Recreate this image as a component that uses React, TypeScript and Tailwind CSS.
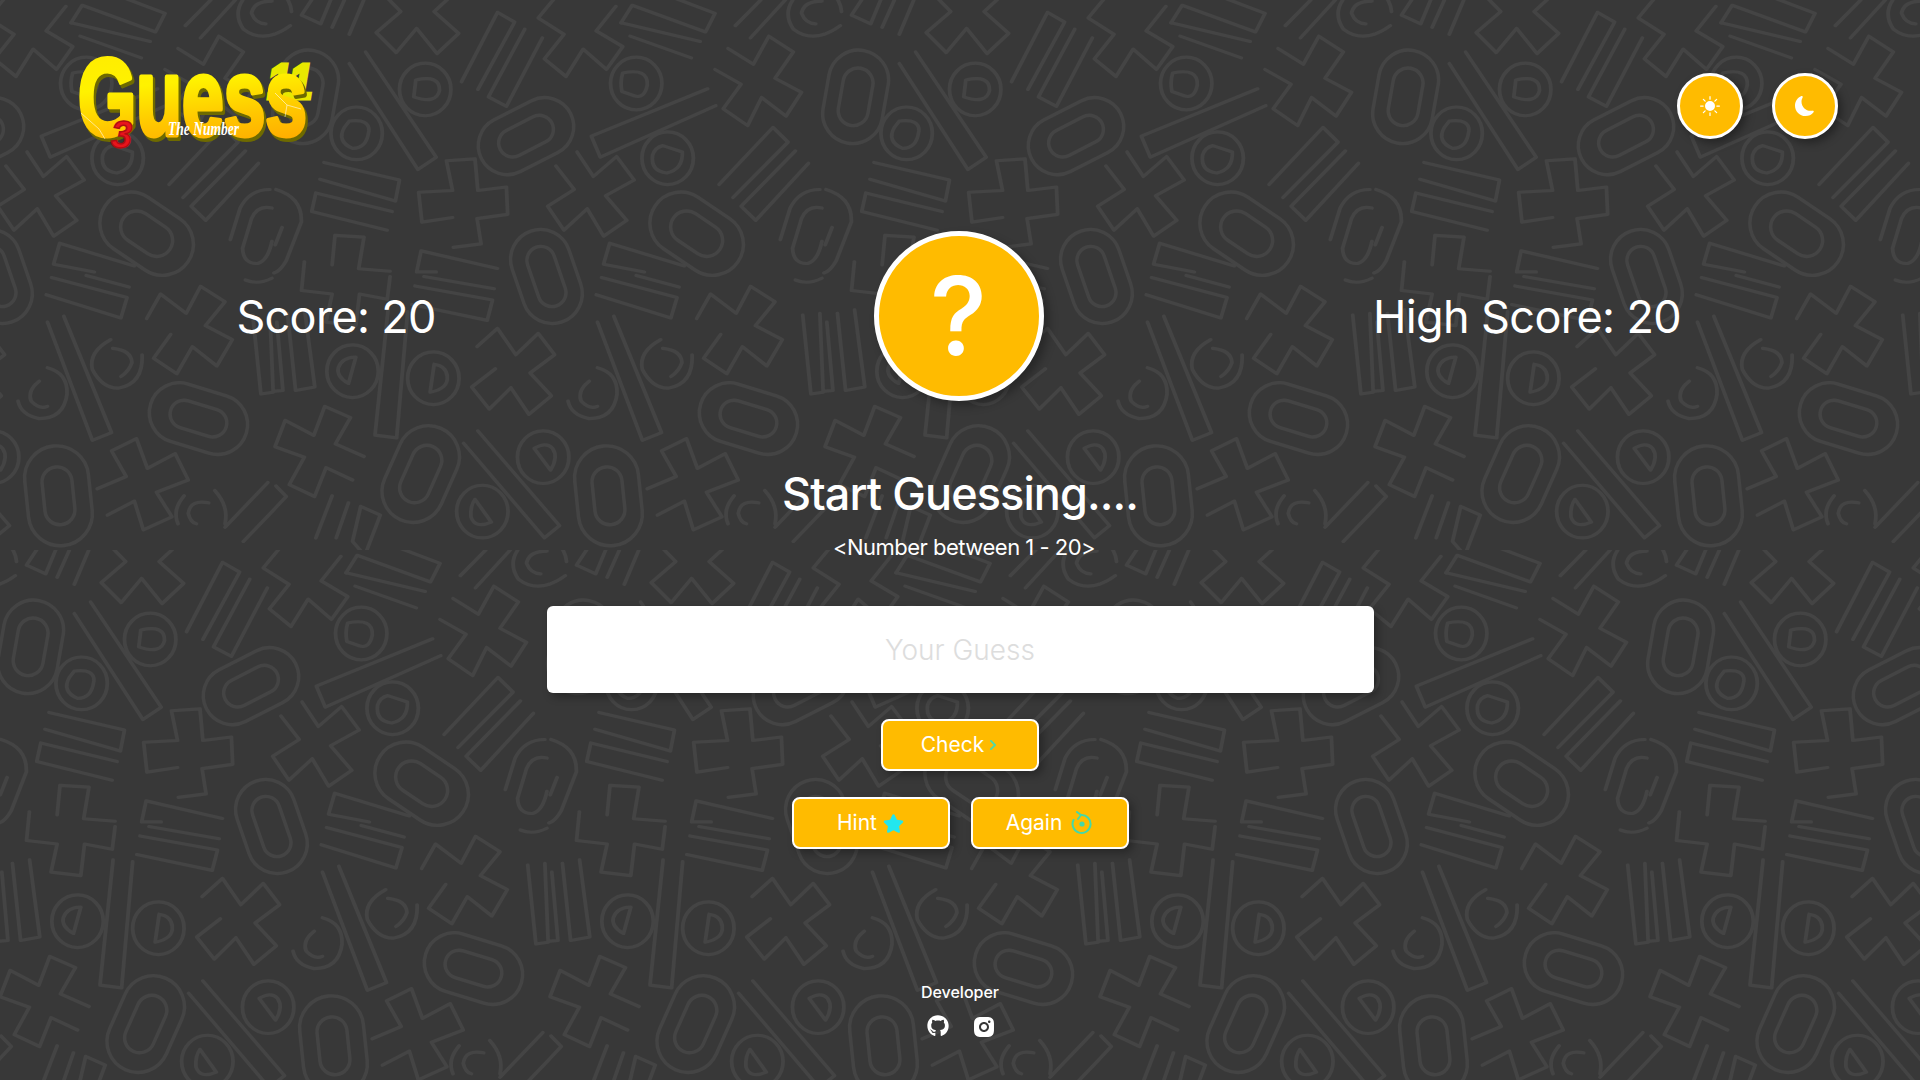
import React from 'react';
import { BsSunFill, BsMoonFill } from 'react-icons/bs';
import { FaGithub, FaStar, FaChevronRight } from 'react-icons/fa';
import { RiInstagramFill } from 'react-icons/ri';

const FONT = "font-['Inter','Noto_Sans',sans-serif]";

// background shapes, traced in a 2.45 x 2.85 stretched frame
const LINES = [
  '65,100 105,30 137,55 112,125 65,100', '140,135 170,57', '182,155 220,50',
  '270,45 308,90 248,150 297,207 347,138 397,210 450,152 390,90 432,45',
  '457,290 545,92 587,120 497,312', '612,140 523,333 567,360 655,165',
  '835,75 787,145 852,190 812,255 755,197 713,275 660,225 708,155 645,108 690,45',
  '848,122 875,72 1055,148 1078,95 930,30', '848,122 1042,175', '870,160 1020,222',
  '1128,130 1190,57', '1165,165 1250,57',
  '1110,195 1172,240 1210,160 1270,205 1225,280 1290,320 1252,388 1192,335 1158,415 1098,367 1142,297 1078,255',
  '222,205 395,505 350,540 182,238',
  '1060,310 775,445 797,505 1080,358',
  '740,490 780,560 837,503 880,570 810,615 862,685 805,730 765,652 708,713 668,645 733,597 688,530',
  '1088,583 1220,420 1257,462 1122,620', '1275,487 1142,645 1178,685 1307,522',
  '120,520 305,570 295,630 110,568', '287,660 100,607 90,660 275,713',
  '435,677 360,690 352,605 435,600 420,515 490,510 497,600 567,590 570,668 495,680 505,752 437,762',
  '140,812 147,728 218,733 205,823 282,830', '72,803 65,885 140,895 125,975 198,985 207,895 275,910 282,845',
  '545,822 358,772 347,832 395,832', '365,845 537,880', '343,872 533,912 520,970 335,925',
  '1003,815 820,750 805,810 905,832', '885,842 990,875', '800,848 985,905 970,963 787,897',
  '1033,965 1067,895 1130,950 1165,873 1225,917 1177,985 1243,1025 1205,1100 1145,1045 1107,1122 1050,1078 1092,1010',
  '1293,955 1313,1180 1343,1175 1335,950', '1352,975 1367,1170 1345,1172', '1378,950 1398,1170 1445,1160 1420,940',
  '277,940 245,1297 298,1305 325,945',
  '495,1045 545,993 590,1068 645,1007 685,1068 625,1120 677,1185 622,1238 578,1162 525,1223 482,1160 540,1108',
  '790,975 900,1312 947,1290 830,958',
  '218,1358 148,1322 185,1247 122,1215 95,1298 25,1255 0,1330 72,1360 35,1438 97,1472 125,1390 190,1425',
  '497,1285 697,1555 660,1590 462,1320',
  '912,1450 983,1415 947,1342 1008,1307 1035,1392 1103,1350 1135,1425 1057,1460 1095,1530 1025,1567 1003,1485 937,1525',
  '1225,1560 1330,1432', '1350,1442 1375,1472 1350,1503 1270,1600',
  '140,1470 100,1590', '180,1490 150,1590', '210,1500 258,1525 220,1640 190,1600 210,1500',
];

const ARCS = [
  'M345,285 Q405,270 403,315 Q395,355 340,333 Z',
  'M182,402 Q232,395 230,430 Q225,480 190,480 Q150,460 170,420 Z',
  'M852,265 Q915,250 912,300 Q905,340 880,330 L850,318 Q845,290 852,265 Z',
  'M950,472 L998,490 Q1000,540 960,550 Q920,545 925,500 Q930,478 950,472 Z',
  'M198,1075 L180,1150 Q150,1130 155,1105 Q165,1075 198,1075 Z',
  'M390,1095 L380,1175 Q425,1165 422,1130 Q420,1100 390,1095 Z',
  'M635,1335 L675,1397 Q695,1360 680,1335 Q665,1315 635,1335 Z',
  'M490,1480 L530,1545 Q490,1565 480,1530 Q478,1500 490,1480 Z',
  'M1238,740 L1262,650 Q1285,597 1335,597', 'M1350,597 Q1415,620 1412,690 L1375,800 Q1360,830 1345,835',
  'M1275,855 Q1305,870 1340,850', 'M1340,650 Q1305,640 1290,680 L1268,765 Q1270,810 1305,808 Q1330,800 1340,745',
  'M1348,755 L1365,705',
  'M790,1105 Q840,1120 838,1180 Q830,1250 770,1250 Q725,1240 718,1200', 'M770,1143 Q740,1170 750,1200 Q770,1225 790,1215',
  'M945,1025 Q890,1060 900,1110 Q925,1165 965,1163 Q1025,1150 1022,1068', 'M950,1050 Q995,1055 997,1090 Q990,1115 970,1130',
  'M1125,1470 Q1095,1510 1110,1550', 'M1200,1455 Q1235,1500 1225,1550', 'M1185,1490 Q1140,1480 1135,1520 Q1140,1545 1155,1550',
  'M1280,40 Q1240,90 1270,140 Q1320,185 1385,130', 'M1340,60 Q1295,60 1290,95 Q1300,125 1325,125', 'M1350,20 Q1385,50 1388,90',
];

const RINGS = [[368, 312], [200, 437], [885, 295], [962, 508], [190, 1115], [388, 1135], [657, 1360], [508, 1515]];

// x, y (frame), outer w, outer l, tilt, inner w, inner l
const PILLS = [
  [75, 333, 60, 94, 10, 30, 58],
  [615, 445, 58, 100, 63, 28, 58],
  [1033, 723, 62, 100, -56, 32, 56],
  [665, 845, 60, 96, -19, 28, 62],
  [1160, 1250, 60, 100, -73, 28, 58],
  [357, 1408, 62, 100, 24, 30, 60],
  [817, 1470, 64, 100, -6, 30, 58],
];

function BgPattern() {
  return (
    <svg className="absolute inset-0" width="1920" height="1080">
      <defs>
        <g id="bg-shapes" fill="none" stroke="#444444" strokeWidth="3.4" strokeLinecap="round" strokeLinejoin="round">
          <g transform="scale(0.40816 0.35088) translate(0 -57)" strokeWidth="9">
            {LINES.map((p, i) => <polyline key={i} points={p} />)}
            {ARCS.map((d, i) => <path key={i} d={d} />)}
            {RINGS.map(([x, y], i) => <ellipse key={i} cx={x} cy={y} rx="63" ry="75" />)}
          </g>
          {PILLS.map(([x, y, w, l, a, iw, il], i) => (
            <g key={i} transform={`translate(${x / 2.45} ${(y - 57) / 2.85}) rotate(${a})`}>
              <rect x={-w / 2} y={-l / 2} width={w} height={l} rx={w / 2} />
              <rect x={-iw / 2} y={-il / 2} width={iw} height={il} rx={iw / 2} />
            </g>
          ))}
        </g>
        <pattern id="bg-row-1" width="550" height="550" patternUnits="userSpaceOnUse" patternTransform="translate(275 0)">
          <use href="#bg-shapes" x="-550" />
          <use href="#bg-shapes" />
          <use href="#bg-shapes" x="550" />
        </pattern>
        <pattern id="bg-row-2" width="550" height="550" patternUnits="userSpaceOnUse" patternTransform="translate(0 550)">
          <use href="#bg-shapes" x="-550" />
          <use href="#bg-shapes" />
          <use href="#bg-shapes" x="550" />
        </pattern>
      </defs>
      <rect x="0" y="0" width="1920" height="550" fill="url(#bg-row-1)" />
      <rect x="0" y="550" width="1920" height="530" fill="url(#bg-row-2)" />
    </svg>
  );
}

function Logo() {
  const heavy = { fontFamily: "'Liberation Sans', sans-serif", fontWeight: 700 };
  return (
    <svg width="250" height="100" viewBox="0 0 250 100" className="block">
      <defs>
        <linearGradient id="logo-fill" x1="0" y1="0" x2="0.2" y2="1">
          <stop offset="0" stopColor="#ffea00" />
          <stop offset="0.45" stopColor="#fff200" />
          <stop offset="0.75" stopColor="#ffc800" />
          <stop offset="1" stopColor="#ffac00" />
        </linearGradient>
      </defs>
      <text x="192" y="44" fontSize="50" fontStyle="italic" textLength="46" lengthAdjust="spacingAndGlyphs" fill="#e8e800" stroke="#e8e800" strokeWidth="3" style={heavy}>11</text>
      <g style={heavy} fontSize="110" strokeLinejoin="round">
        <text x="5" y="83" textLength="229" lengthAdjust="spacingAndGlyphs" fill="#6e6a00" stroke="#6e6a00" strokeWidth="6">Guess</text>
        <text x="3" y="80" textLength="229" lengthAdjust="spacingAndGlyphs" fill="url(#logo-fill)" stroke="url(#logo-fill)" strokeWidth="5">Guess</text>
      </g>
      <path d="M6 58 L24 74 L30 84 M200 38 L212 50 L210 62 M212 50 L226 54" fill="none" stroke="#fff" strokeOpacity="0.55" strokeWidth="1" />
      <text x="36" y="93" fontSize="38" fontStyle="italic" fill="#e8141c" stroke="#b00d12" strokeWidth="1.5" style={heavy}>3</text>
      <text x="93" y="80" fontSize="18" fontStyle="italic" fontWeight="700" textLength="71" lengthAdjust="spacingAndGlyphs" fill="#ffffff" style={{ fontFamily: "'Liberation Serif', serif" }}>The Number</text>
    </svg>
  );
}

function ThemeButton({ children }: { children: React.ReactNode }) {
  return (
    <button className="w-[66px] h-[66px] rounded-full bg-[#ffbb00] border-[3px] border-white text-white flex items-center justify-center shadow-[4px_4px_8px_rgba(0,0,0,0.35)]">
      {children}
    </button>
  );
}

function ActionButton({ children }: { children: React.ReactNode }) {
  return (
    <button className="w-[158px] h-[52px] rounded-lg bg-[#ffbb00] border-2 border-white text-white text-[21px] flex items-center justify-center gap-[6px] shadow-[4px_4px_8px_rgba(0,0,0,0.3)]">
      {children}
    </button>
  );
}

function ResetIcon() {
  return (
    <svg className="ml-[3px]" width="22" height="24" viewBox="0 0 22 24" fill="none" stroke="#45d8a8" strokeWidth="2" strokeLinecap="round" strokeLinejoin="round">
      <path d="M10 4 A9 9 0 1 1 2.5 9" />
      <path d="M6 1 L10 4 L7 8" />
      <circle cx="11" cy="13" r="2.6" fill="#45d8a8" stroke="none" />
    </svg>
  );
}

export default function App() {
  return (
    <div className={`relative w-full h-[1080px] overflow-hidden bg-[#383838] text-white ${FONT}`}>
      <BgPattern />
      <div className="relative flex flex-col">
        <header className="flex justify-between items-start pt-[55px] pl-[75px] pr-[82px] h-[150px]">
          <Logo />
          <div className="flex gap-[29px] mt-[18px]">
            <ThemeButton><BsSunFill size={20} /></ThemeButton>
            <ThemeButton><BsMoonFill size={20} /></ThemeButton>
          </div>
        </header>

        <div className="grid grid-cols-[672px_573px_564px] items-center mt-[81px]">
          <div className="text-center text-[45px] leading-none tracking-[-0.7px]">Score: 20</div>
          <div className="flex justify-center">
            <div className="w-[170px] h-[170px] rounded-full bg-[#ffbb00] border-[5px] border-white flex items-center justify-center text-[108px] font-medium leading-none shadow-[5px_5px_10px_rgba(0,0,0,0.3)]">
              ?
            </div>
          </div>
          <div className="text-center text-[45px] leading-none tracking-[-0.6px]">High Score: 20</div>
        </div>

        <h1 className="mt-[68px] text-center text-[45px] leading-[50px] font-medium tracking-[-0.9px]">Start Guessing....</h1>
        <p className="mt-[14px] pl-[8px] text-center text-[22px] leading-[28px] tracking-[-0.5px]">&lt;Number between 1 - 20&gt;</p>

        <input
          placeholder="Your Guess"
          className="mt-[45px] mx-auto block w-[827px] h-[87px] rounded-md bg-white text-center text-[28px] font-light outline-none text-gray-800 placeholder:text-[#dddddd] shadow-[4px_4px_8px_rgba(0,0,0,0.3)]"
        />

        <div className="mt-[26px] flex justify-center">
          <ActionButton>Check <FaChevronRight size={12} className="-ml-[3px] text-[#4fd9a8]" /></ActionButton>
        </div>
        <div className="mt-[26px] flex justify-center gap-[21px]">
          <ActionButton>Hint <FaStar size={21} className="text-[#22e6ee]" /></ActionButton>
          <ActionButton>Again <ResetIcon /></ActionButton>
        </div>

        <footer className="mt-[131px] flex flex-col items-center">
          <span className="text-base font-medium leading-[24px]">Developer</span>
          <div className="mt-[11px] pl-[2px] flex gap-[23px]">
            <FaGithub size={22} />
            <RiInstagramFill size={24} />
          </div>
        </footer>
      </div>
    </div>
  );
}
